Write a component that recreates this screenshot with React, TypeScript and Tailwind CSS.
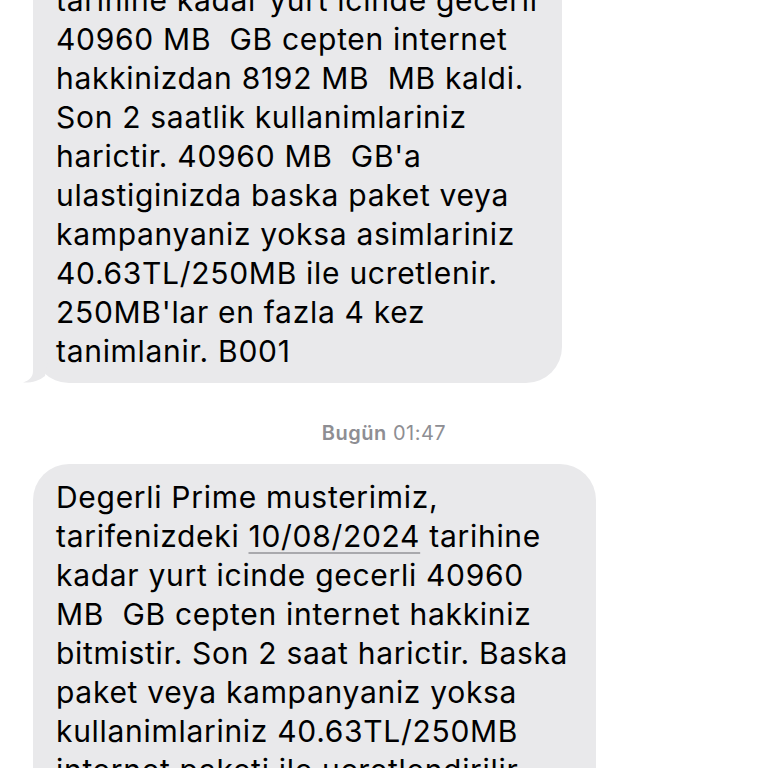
const first = [
  'Degerli Prime musterimiz,',
  'tarifenizdeki 10/08/2024',
  'tarihine kadar yurt icinde gecerli',
  '40960 MB  GB cepten internet',
  'hakkinizdan 8192 MB  MB kaldi.',
  'Son 2 saatlik kullanimlariniz',
  "harictir. 40960 MB  GB'a",
  'ulastiginizda baska paket veya',
  'kampanyaniz yoksa asimlariniz',
  '40.63TL/250MB ile ucretlenir.',
  "250MB'lar en fazla 4 kez",
  'tanimlanir. B001',
];

const second = [
  'kadar yurt icinde gecerli 40960',
  'MB  GB cepten internet hakkiniz',
  'bitmistir. Son 2 saat harictir. Baska',
  'paket veya kampanyaniz yoksa',
  'kullanimlariniz 40.63TL/250MB',
  'internet paketi ile ucretlendirilir.',
];

// iMessage-style tail on the received bubble
function Tail() {
  return (
    <svg className="absolute left-[-11px] bottom-0" width="40" height="45" viewBox="0 0 40 45">
      <path d="M11 0 L11 33 C11 40 6 43 1 44.5 C9 45 17 43 23 38 L30 0 Z" fill="#e9e9eb" />
    </svg>
  );
}

export default function App() {
  return (
    <div
      className="w-[768px] h-[768px] overflow-hidden bg-white text-black"
      style={{ fontFamily: 'Inter, "Noto Sans", sans-serif' }}
    >
      <div className="mt-[-111px] pl-[33px] flex flex-col">
        <div className="relative w-[529px] rounded-[36px] bg-[#e9e9eb] pl-[23px] pr-2 pt-[14px] pb-[12px] text-[30px] leading-[39px] tracking-[0.7px] whitespace-pre">
          {first.map((l) => (
            <div key={l}>{l}</div>
          ))}
          <Tail />
        </div>

        <div className="mt-[35px] mb-[16px] pr-[33px] w-[735px] text-center text-[20px] tracking-[0.5px] text-[#8e8e93]">
          <span className="font-semibold">Bugün</span> 01:47
        </div>

        <div className="w-[563px] rounded-[36px] bg-[#e9e9eb] pl-[23px] pr-2 pt-[14px] pb-[14px] text-[30px] leading-[39px] tracking-[0.7px] whitespace-pre">
          <div>Degerli Prime musterimiz,</div>
          <div>
            tarifenizdeki{' '}
            <span className="underline decoration-[#a9a9ad] decoration-2 underline-offset-[5px]">10/08/2024</span>{' '}
            tarihine
          </div>
          {second.map((l) => (
            <div key={l}>{l}</div>
          ))}
        </div>
      </div>
    </div>
  );
}
